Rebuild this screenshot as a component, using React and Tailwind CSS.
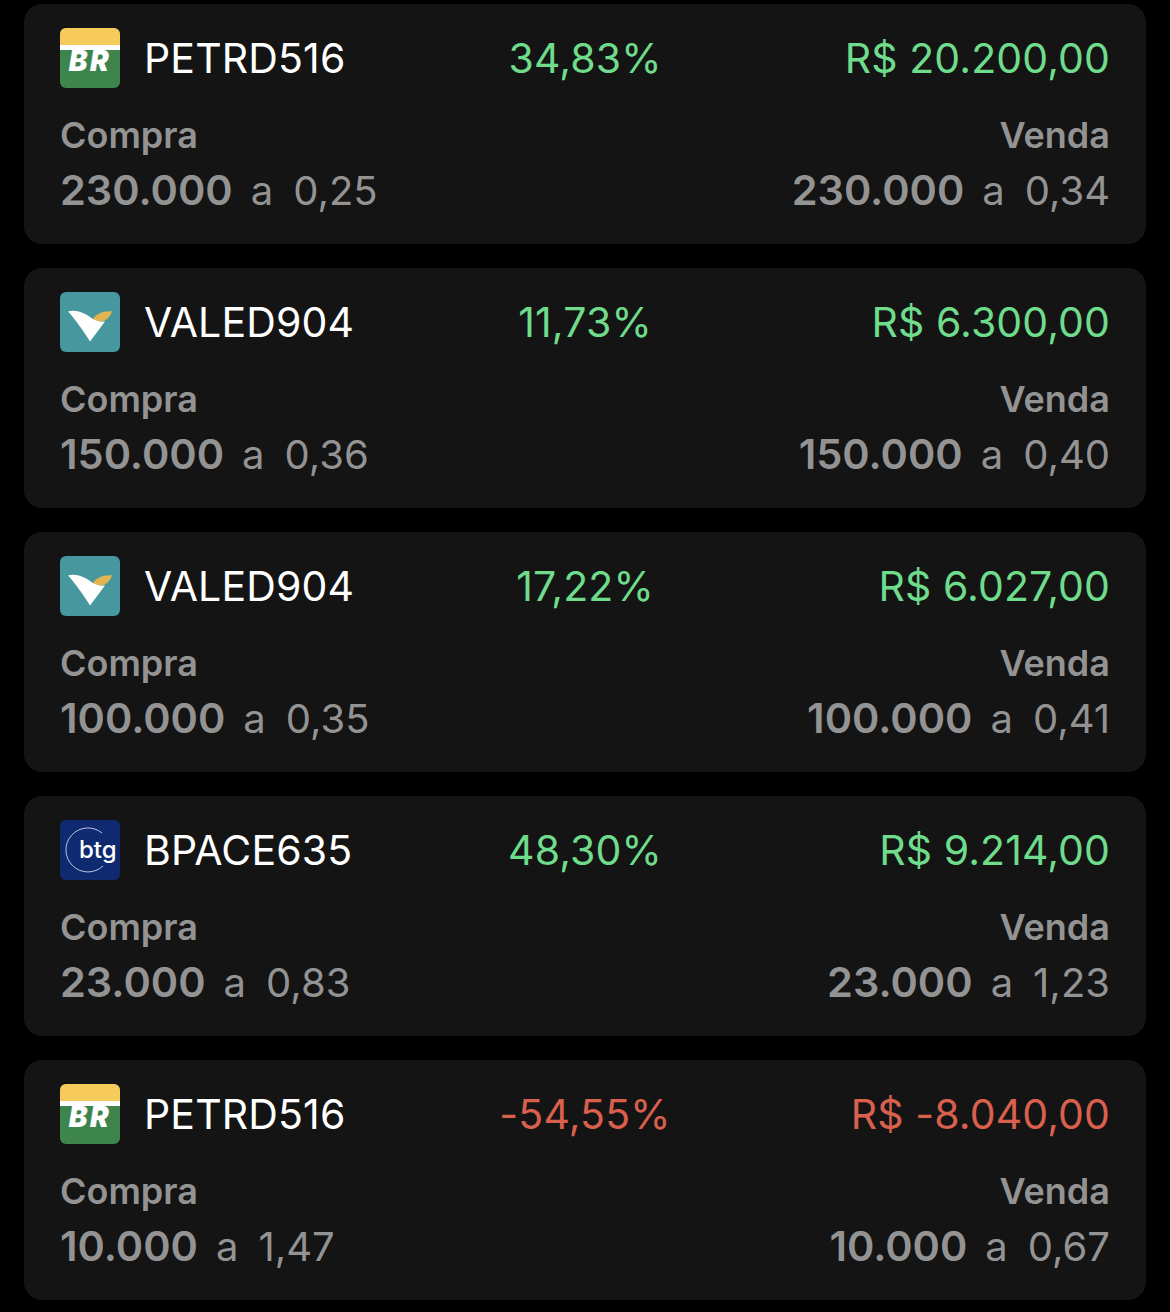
const trades = [
  { logo: 'petro', name: 'PETRD516', pct: '34,83%', total: 'R$ 20.200,00', buyQty: '230.000', buyPrice: '0,25', sellQty: '230.000', sellPrice: '0,34' },
  { logo: 'vale', name: 'VALED904', pct: '11,73%', total: 'R$ 6.300,00', buyQty: '150.000', buyPrice: '0,36', sellQty: '150.000', sellPrice: '0,40' },
  { logo: 'vale', name: 'VALED904', pct: '17,22%', total: 'R$ 6.027,00', buyQty: '100.000', buyPrice: '0,35', sellQty: '100.000', sellPrice: '0,41' },
  { logo: 'btg', name: 'BPACE635', pct: '48,30%', total: 'R$ 9.214,00', buyQty: '23.000', buyPrice: '0,83', sellQty: '23.000', sellPrice: '1,23' },
  { logo: 'petro', name: 'PETRD516', pct: '-54,55%', total: 'R$ -8.040,00', buyQty: '10.000', buyPrice: '1,47', sellQty: '10.000', sellPrice: '0,67', loss: true },
];

function PetroLogo() {
  return (
    <div className="w-[60px] h-[60px] rounded-[6px] overflow-hidden flex flex-col shrink-0 bg-[#3d854d]">
      <div className="h-[17px] bg-[#f7cb59]" />
      <div className="h-[5px] bg-white" />
      <div className="h-[22px] flex items-center justify-center text-white italic font-black text-[28px] leading-none tracking-[2.5px]">BR</div>
    </div>
  );
}

function ValeLogo() {
  return (
    <div className="w-[60px] h-[60px] rounded-[6px] overflow-hidden shrink-0 bg-[#46989e]">
      <svg viewBox="0 0 60 60" className="w-full h-full">
        <path d="M33 27 C36 22 44 18.500 52 19.500 C50 26 44 30 38 30 Z" fill="#e3b552" />
        <path d="M8 19.500 C15 17 24 20 33 27 C36 29 40 30 45 29.500 C40 36 35 43 30 49.500 C24 40 16 28 8 19.500 Z" fill="#fff" />
      </svg>
    </div>
  );
}

function BtgLogo() {
  return (
    <div className="relative w-[60px] h-[60px] rounded-[6px] overflow-hidden shrink-0 bg-[#0f2a70]">
      <svg viewBox="0 0 60 60" className="absolute inset-0 w-full h-full">
        <path d="M42 13 A22 22 0 1 0 43 46" fill="none" stroke="#cfd8ee" strokeWidth="0.9" />
      </svg>
      <span className="absolute left-[19px] top-[17px] text-white text-[24px] leading-[26px] font-medium">btg</span>
    </div>
  );
}

function Side({ label, qty, price, right }) {
  return (
    <div className={right ? 'flex flex-col items-end' : 'flex flex-col items-start'}>
      <div className="text-[36px] leading-[40px] font-semibold text-[#939393]">{label}</div>
      <div className="mt-[11px] flex items-baseline leading-[48px] text-[#939393]">
        <span className="text-[41.5px] font-semibold">{qty}</span>
        <span className="ml-[18px] text-[40px] font-normal">a</span>
        <span className="ml-[20px] text-[40px] font-normal">{price}</span>
      </div>
    </div>
  );
}

function TradeCard({ trade }) {
  const color = trade.loss ? 'text-[#d9604c]' : 'text-[#6fdc8c]';
  return (
    <div className="h-[240px] rounded-[18px] bg-[#141414] px-[36px] pt-[24px]">
      <div className="grid grid-cols-3 items-center h-[60px]">
        <div className="flex items-center gap-[24px]">
          {trade.logo === 'petro' && <PetroLogo />}
          {trade.logo === 'vale' && <ValeLogo />}
          {trade.logo === 'btg' && <BtgLogo />}
          <span className="text-[41px] tracking-[0.15px] leading-none text-white whitespace-nowrap">{trade.name}</span>
        </div>
        <div className={`text-center text-[41px] tracking-[0.15px] leading-none ${color}`}>{trade.pct}</div>
        <div className={`text-right text-[41px] tracking-[0.1px] leading-none whitespace-nowrap ${color}`}>{trade.total}</div>
      </div>
      <div className="mt-[27px] flex justify-between">
        <Side label="Compra" qty={trade.buyQty} price={trade.buyPrice} />
        <Side label="Venda" qty={trade.sellQty} price={trade.sellPrice} right />
      </div>
    </div>
  );
}

export default function App() {
  return (
    <div className="w-[1170px] h-[1312px] overflow-hidden bg-black px-[24px] pt-[4px] flex flex-col gap-[24px] font-['Inter',sans-serif]">
      {trades.map((t, i) => (
        <TradeCard key={i} trade={t} />
      ))}
    </div>
  );
}
